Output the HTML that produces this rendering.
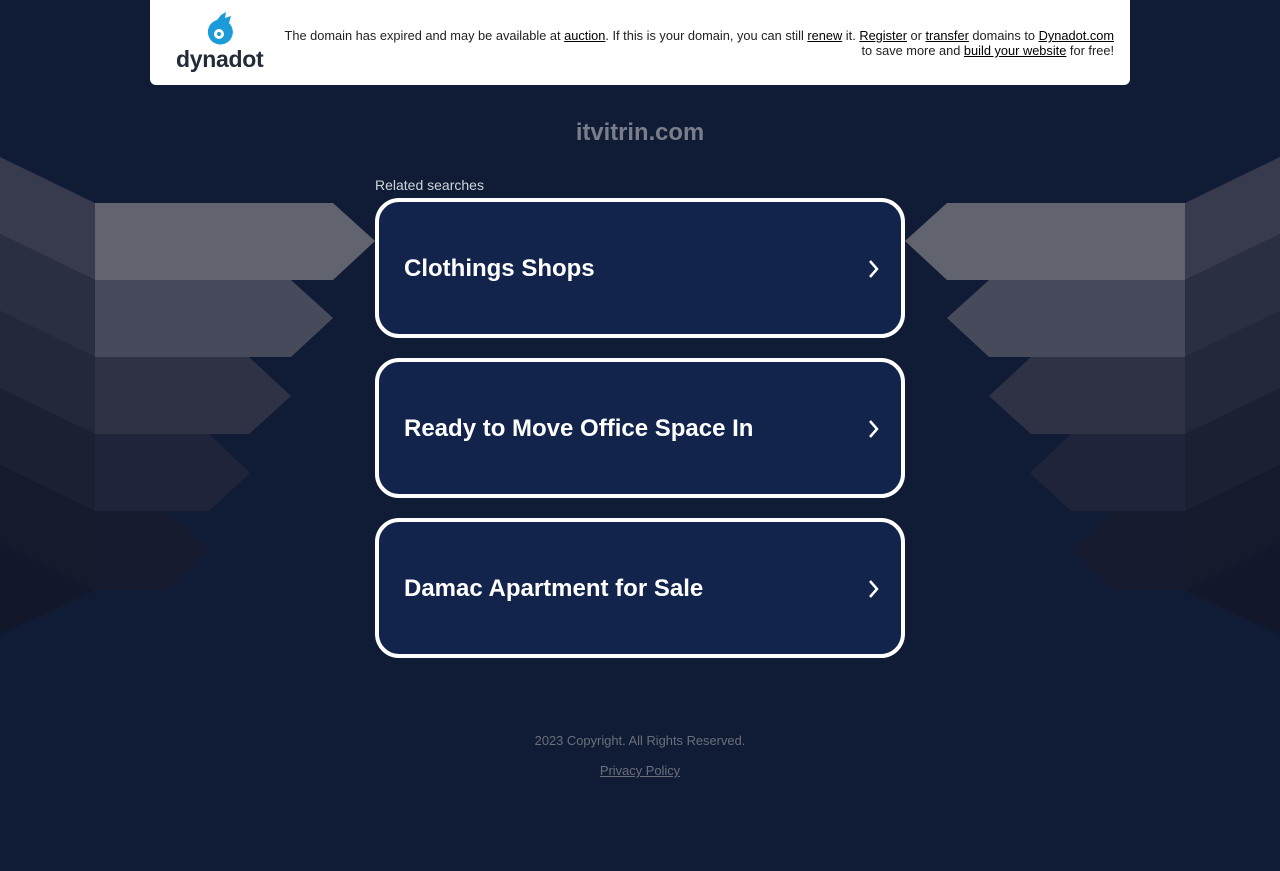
<!DOCTYPE html>
<html><head><meta charset="utf-8"><style>
body{margin:0;width:1280px;height:871px;background:#101c36;font-family:"Liberation Sans",Arial,sans-serif;position:relative;overflow:hidden}
svg.bg{position:absolute;left:0;top:0}
.top{position:absolute;left:150px;top:0;width:980px;height:85px;background:#fff;border-radius:0 0 6px 6px}
.msg{position:absolute;right:16px;top:28px;font-size:12.8px;line-height:15px;color:#222;text-align:right;white-space:nowrap}
.msg u{color:#000}
.logo{position:absolute;left:26px;top:12px}
.logo .t{position:absolute;left:0;top:34px;font-size:23px;font-weight:bold;color:#232b38;letter-spacing:-0.3px}
h1{position:absolute;left:0;width:1280px;top:119px;margin:0;text-align:center;font-size:23.8px;color:#7a7e88;font-weight:bold}
.rel{position:absolute;left:375px;top:177px;font-size:14px;color:#d0d3da}
.card{position:absolute;left:375px;width:522px;height:132px;border:4px solid #fff;border-radius:24px;background:#12244b}
.card span{position:absolute;left:25px;top:53px;font-size:24px;font-weight:bold;color:#fff}
.card svg{position:absolute;right:20px;top:56px}
.foot{position:absolute;left:0;width:1280px;text-align:center;font-size:12.9px;color:#6b6f7a}
</style></head><body>
<svg class="bg" width="1280" height="871">
<g id="L">
<polygon points="0,157 95,203 95,280 0,234" fill="#373b4d"/>
<polygon points="0,234 95,280 95,357 0,311" fill="#2b2f42"/>
<polygon points="0,311 95,357 95,434 0,388" fill="#24283b"/>
<polygon points="0,388 95,434 95,511 0,465" fill="#1c2033"/>
<polygon points="0,465 95,511 95,590 0,542" fill="#161a2d"/>
<polygon points="0,542 95,590 95,590 0,635" fill="#12172b"/>
<polygon points="95,203 333,203 375,241 333,280 95,280" fill="#61646f"/>
<polygon points="95,280 291,280 333,318 291,357 95,357" fill="#474a5a"/>
<polygon points="95,357 249,357 291,396 249,434 95,434" fill="#2e3244"/>
<polygon points="95,434 209,434 250,473 209,511 95,511" fill="#20243a"/>
<polygon points="95,511 168,511 208,550 168,590 95,590" fill="#151a2e"/>
</g>
<use href="#L" transform="translate(1280,0) scale(-1,1)"/>
</svg>
<div class="top">
 <div class="logo">
  <svg width="40" height="40" style="position:absolute;left:28px;top:0"><path d="M17 3 L22 0 L21 6 L27 4 L25 11 A12.5 12.5 0 1 1 13 8 Z" fill="#1b9bd7"/><circle cx="15" cy="22" r="5" fill="#fff"/><circle cx="15" cy="22" r="2" fill="#1b9bd7"/></svg>
  <div class="t">dynadot</div>
 </div>
 <div class="msg">The domain has expired and may be available at <u>auction</u>. If this is your domain, you can still <u>renew</u> it. <u>Register</u> or <u>transfer</u> domains to <u>Dynadot.com</u><br>to save more and <u>build your website</u> for free!</div>
</div>
<h1>itvitrin.com</h1>
<div class="rel">Related searches</div>
<div class="card" style="top:198px"><span>Clothings Shops</span><svg width="14" height="22"><path d="M3 3 L10 11 L3 19" stroke="#fff" stroke-width="2.5" fill="none"/></svg></div>
<div class="card" style="top:358px"><span>Ready to Move Office Space In</span><svg width="14" height="22"><path d="M3 3 L10 11 L3 19" stroke="#fff" stroke-width="2.5" fill="none"/></svg></div>
<div class="card" style="top:518px"><span>Damac Apartment for Sale</span><svg width="14" height="22"><path d="M3 3 L10 11 L3 19" stroke="#fff" stroke-width="2.5" fill="none"/></svg></div>
<div class="foot" style="top:733px">2023 Copyright. All Rights Reserved.</div>
<div class="foot" style="top:763px"><u>Privacy Policy</u></div>
</body></html>
